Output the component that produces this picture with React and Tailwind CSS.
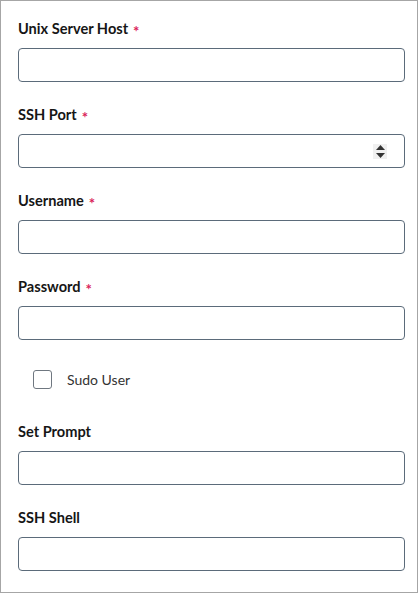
import React from "react";

function Label({ children, required }) {
  return (
    <div className="h-5 flex items-center text-[14.6px] font-bold text-[#161616] leading-5">
      <span>{children}</span>
      {required && <span className="ml-[5px] mt-[3px] text-[#da1e5a] text-[15px] font-bold">*</span>}
    </div>
  );
}

function Field({ label, required, spinner, className = "" }) {
  return (
    <div className={className}>
      <Label required={required}>{label}</Label>
      <div className="mt-[9px] h-[34px] w-[387px] rounded-[4px] border border-[#5b6b7a] bg-white flex items-center justify-end pr-[17px]">
        {spinner && (
          <div className="w-[14px] h-[15px] bg-[#f0f0f0] flex flex-col items-center justify-center gap-[3px]">
            <svg width="9" height="5" viewBox="0 0 9 5"><path d="M0 5 L4.5 0 L9 5 Z" fill="#333" /></svg>
            <svg width="9" height="5" viewBox="0 0 9 5"><path d="M0 0 L9 0 L4.5 5 Z" fill="#333" /></svg>
          </div>
        )}
      </div>
    </div>
  );
}

export default function App() {
  return (
    <div className="w-[418px] h-[593px] border border-[#a6a6a6] bg-white pl-[17px] pt-[18px]" style={{ fontFamily: '"Source Sans Pro", Lato, "Open Sans", sans-serif' }}>
      <Field label="Unix Server Host" required />
      <Field label="SSH Port" required spinner className="mt-[23px]" />
      <Field label="Username" required className="mt-[23px]" />
      <Field label="Password" required className="mt-[23px]" />
      <div className="mt-[30px] ml-[15px] flex items-center h-[19px]">
        <div className="w-[19px] h-[19px] rounded-[3px] border border-[#6f7780] bg-white" />
        <span className="ml-[15px] text-[14px] text-[#333]">Sudo User</span>
      </div>
      <Field label="Set Prompt" className="mt-[33px]" />
      <Field label="SSH Shell" className="mt-[23px]" />
    </div>
  );
}
